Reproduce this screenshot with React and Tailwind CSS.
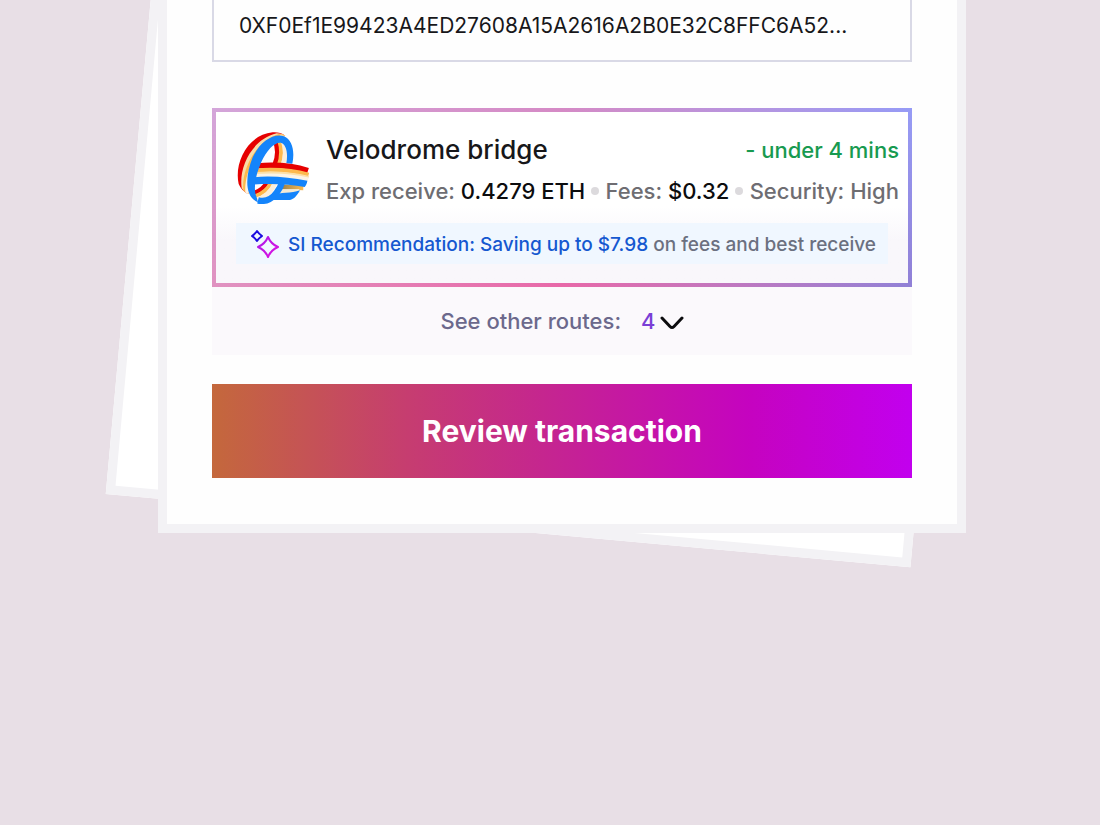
import React, { useState } from 'react';

const ADDRESS = '0XF0Ef1E99423A4ED27608A15A2616A2B0E32C8FFC6A52...';

const VelodromeLogo = () => (
  <svg viewBox="33 36 216 216" className="size-[72px] shrink-0" role="img" aria-label="Velodrome">
    <defs>
      <linearGradient id="velo-shade" x1="0" y1="0" x2="1" y2="0">
        <stop offset="0" stopColor="#8d7a4c" />
        <stop offset="1" stopColor="#fdbb4f" />
      </linearGradient>
      <clipPath id="velo-loop">
        <path d="M88 240C68 206 80 156 100 116C120 76 146 58 162 66C180 74 188 98 182 140L180 200L150 240Z" />
      </clipPath>
    </defs>
    {/* back arc, each stripe laid over the one before */}
    <path d="M38 192C24 130 64 44 140 37C156 36 168 40 176 46L120 110L66 222C54 216 44 206 38 192Z" fill="#e60000" />
    <path d="M47 204C38 140 78 58 152 40C162 40 170 42 178 47L120 110L66 222C58 218 52 212 47 204Z" fill="#f9dca8" />
    <path d="M52 211C46 150 86 66 158 42C166 43 172 44 178 47L120 110L66 222C60 219 56 215 52 211Z" fill="#fdb94d" />
    <path d="M58 217C54 158 92 74 164 46L178 48L120 110L66 222C62 220 60 219 58 217Z" fill="#fbf3e6" />
    {/* inside of the loop */}
    <g fill="none" clipPath="url(#velo-loop)">
      <path d="M60 36H200V250H60Z" fill="#fefdfe" />
      <path d="M146 58C158 84 156 112 146 136" stroke="#e60000" strokeWidth="15" />
      <path d="M158 56C168 84 167 112 158 136" stroke="#fdb94d" strokeWidth="12" />
      <path d="M169 56C180 84 180 112 170 136" stroke="#fbeedb" strokeWidth="14" />
      <path d="M74 222C98 216 114 204 124 186" stroke="#e60000" strokeWidth="13" />
      <path d="M78 232C108 224 126 208 136 186" stroke="#fdb94d" strokeWidth="12" />
      <path d="M84 241C118 234 138 214 148 186" stroke="#fbeedb" strokeWidth="14" />
    </g>
    <g fill="none">
      {/* lower tails */}
      <path d="M158 200L232 203" stroke="url(#velo-shade)" strokeWidth="15" />
      <path d="M156 214L220 213" stroke="#f4ead4" strokeWidth="12" />
      <path d="M96 241C122 248 142 232 152 218C160 207 164 200 167 190" stroke="#1484fb" strokeWidth="19" />
      <path d="M124 240L138 224C164 218 196 220 222 211C214 226 204 238 192 240Z" fill="#1484fb" />
      {/* front band */}
      <path d="M94 138C142 134 196 136 246 152" stroke="#e60000" strokeWidth="17" />
      <path d="M88 151C140 147 196 149 248 164" stroke="#fdb94d" strokeWidth="12" />
      <path d="M86 160C140 156 196 158 248 172" stroke="#fde0a8" strokeWidth="8" />
      <path d="M82 169C140 164 196 167 246 179" stroke="#fbf3e6" strokeWidth="13" />
      <path d="M80 172C134 166 190 172 244 182C243 190 240 196 236 201C190 192 134 190 76 194Z" fill="#1484fb" />
      {/* blue loop */}
      <path
        d="M96 247C54 230 58 166 80 112C102 64 144 38 174 49C199 59 207 94 199 131L181 129C187 98 180 72 164 68C146 66 122 90 106 126C90 162 80 206 92 232Z"
        fill="#1484fb"
      />
    </g>
  </svg>
);

const SparkleIcon = () => (
  <svg viewBox="0 0 30 30" className="size-[30px] shrink-0" fill="none" strokeWidth="2" strokeLinejoin="round" aria-hidden="true">
    <defs>
      <linearGradient id="sparkle" x1="0" y1="0" x2="1" y2="1">
        <stop offset="0" stopColor="#a81be8" />
        <stop offset="1" stopColor="#e010e0" />
      </linearGradient>
    </defs>
    <path d="M7 2Q9 5 12 7Q9 9 7 12Q5 9 2 7Q5 5 7 2Z" stroke="#1a0be0" />
    <path d="M18 8Q21 15 28 18Q21 21 18 28Q15 21 8 18Q15 15 18 8Z" stroke="url(#sparkle)" />
  </svg>
);

const Dot = () => <span className="size-2 rounded-full bg-[#dcdadd]" />;

const RouteCard = () => (
  <section className="relative mt-[46px] bg-linear-to-r from-[#d4a6da] via-[#d58bc6] to-[#979cf6] p-1">
    {/* warmer lower half of the frame */}
    <div className="absolute inset-0 bg-linear-to-r from-[#e092c0] via-[#e868a8] to-[#9080d6] mask-t-from-0% mask-t-to-100%" />
    <div className="relative bg-linear-to-b from-white from-55% to-[#f9f7fb] to-75% pt-5 pb-[19px]">
      <div className="flex gap-[17px] pr-[9px] pl-[21px]">
        <VelodromeLogo />
        <div className="min-w-0 flex-1">
          <div className="flex items-center justify-between leading-9">
            <h2 className="text-[26px] font-medium text-[#17171a]">Velodrome bridge</h2>
            <p className="text-[22px] font-medium text-[#189a50]">- under 4 mins</p>
          </div>
          <div className="mt-[5px] flex items-center justify-between text-[22px] leading-9 font-medium whitespace-nowrap text-[#6e6d72]">
            <p>Exp receive: <span className="text-[#0c0c0e]">0.4279 ETH</span></p>
            <Dot />
            <p>Fees: <span className="text-[#0c0c0e]">$0.32</span></p>
            <Dot />
            <p>Security: High</p>
          </div>
        </div>
      </div>
      <div className="mx-5 mt-[14px] flex h-[41px] items-center gap-2 bg-[#f0f7ff] pl-[14px]">
        <SparkleIcon />
        <p className="pt-1 text-[19px] font-medium whitespace-nowrap text-[#6b7080]">
          <span className="text-[#1558d0]">SI Recommendation: Saving up to $7.98</span> on fees and best receive
        </p>
      </div>
    </div>
  </section>
);

export default function App() {
  const [address, setAddress] = useState(ADDRESS);

  return (
    <div className="min-h-screen overflow-hidden bg-[#e8dfe6] pl-6 font-['Inter',sans-serif]">
      <main className="relative mx-auto w-full max-w-[808px]">
        {/* tilted sheet behind the card */}
        <div className="absolute bottom-0 left-0 h-[1190px] w-full rotate-[5.2deg] border-9 border-[#f3f2f5] bg-white" />

        <div className="relative border-9 border-t-0 border-[#f3f2f5] bg-[#fefefe] px-[45px] pb-[46px]">
          <input
            aria-label="Recipient address"
            value={address}
            onChange={(e) => setAddress(e.target.value)}
            className="-mt-3 block h-[74px] w-full border-2 border-[#d9d9e6] px-[25px] text-[21px] text-[#17171a] outline-none"
          />
          <RouteCard />
          <button type="button" className="flex h-[68px] w-full items-center justify-center bg-[#fbf9fc] text-[22px] font-medium text-[#6c698c]">
            See other routes:
            <span className="ml-5 text-[#7a3fd6]">4</span>
            <svg viewBox="0 0 24 14" className="mt-1 ml-1 h-[14px] w-6" fill="none" stroke="#0c0c0e" strokeWidth="3" strokeLinecap="round" strokeLinejoin="round" aria-hidden="true">
              <path d="M2 2L10 10.500Q12 12.500 14 10.500L22 2" />
            </svg>
          </button>
          <button
            type="button"
            className="mt-[29px] h-[94px] w-full bg-[linear-gradient(90deg,#c4683c,#c63d70_28%,#c52590_48%,#c503c0_77%,#c200ee)] text-3xl font-bold text-white"
          >
            Review transaction
          </button>
        </div>
      </main>
    </div>
  );
}
